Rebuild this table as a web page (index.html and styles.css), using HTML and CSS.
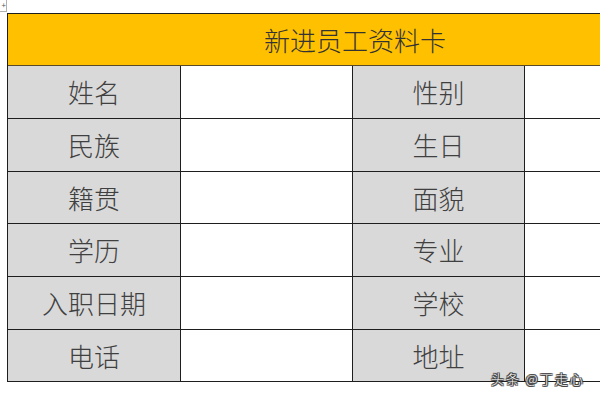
FILE: index.html
```html
<!DOCTYPE html>
<html lang="zh">
<head>
<meta charset="utf-8">
<link rel="stylesheet" href="styles.css">
</head>
<body>
<div class="handle">+</div>
<div class="page">
  <div class="card">
    <div class="title">新进员工资料卡</div>
    <div class="label">姓名</div><div class="value"></div><div class="label">性别</div><div class="value"></div>
    <div class="label">民族</div><div class="value"></div><div class="label">生日</div><div class="value"></div>
    <div class="label">籍贯</div><div class="value"></div><div class="label">面貌</div><div class="value"></div>
    <div class="label">学历</div><div class="value"></div><div class="label">专业</div><div class="value"></div>
    <div class="label">入职日期</div><div class="value"></div><div class="label">学校</div><div class="value"></div>
    <div class="label">电话</div><div class="value"></div><div class="label">地址</div><div class="value"></div>
  </div>
</div>
<div class="watermark">头条 @丁走心</div>
</body>
</html>
```
FILE: styles.css
```css
html, body {
  margin: 0;
  padding: 0;
  width: 600px;
  height: 400px;
  overflow: hidden;
  background: #ffffff;
  font-family: "Noto Sans CJK SC", "Noto Sans", sans-serif;
}
.page {
  width: 600px;
  overflow: hidden;
  padding: 13px 0 0 7px;
  box-sizing: border-box;
}
.card {
  display: grid;
  grid-template-columns: 173px 172px 172px 178px;
  grid-template-rows: 52px 53px 53px 52px 53px 53px 52px;
  width: 696px;
  border-top: 1px solid #1e1e1e;
  border-left: 1px solid #1e1e1e;
}
.card > div {
  box-sizing: border-box;
  border-right: 1px solid #1e1e1e;
  border-bottom: 1px solid #1e1e1e;
  display: flex;
  align-items: center;
  justify-content: center;
}
.title {
  grid-column: 1 / 5;
  background: #ffc000;
  color: #333333;
  font-size: 26px;
  font-weight: 300;
  border-bottom-color: #5a4a2a !important;
}
.label {
  background: #d9d9d9;
  color: #404040;
  font-size: 26px;
  font-weight: 300;
  padding-bottom: 1px;
}
.value {
  background: #ffffff;
}
.handle {
  position: absolute;
  left: 0;
  top: 0;
  width: 6px;
  height: 11px;
  border: 1px solid #b0b0b0;
  border-left: none;
  border-top: none;
  font-size: 8px;
  line-height: 9px;
  color: #555;
  text-align: right;
  overflow: hidden;
}
.watermark {
  position: absolute;
  left: 491px;
  top: 370px;
  font-size: 13px;
  font-weight: 300;
  line-height: 18px;
  letter-spacing: 2px;
  color: #ffffff;
  text-shadow: 1px 0 0 #444, -1px 0 0 #444, 0 1px 0 #444, 0 -1px 0 #444,
    1px 1px 0 #444, -1px -1px 0 #444, 1px -1px 0 #444, -1px 1px 0 #444;
}
```
